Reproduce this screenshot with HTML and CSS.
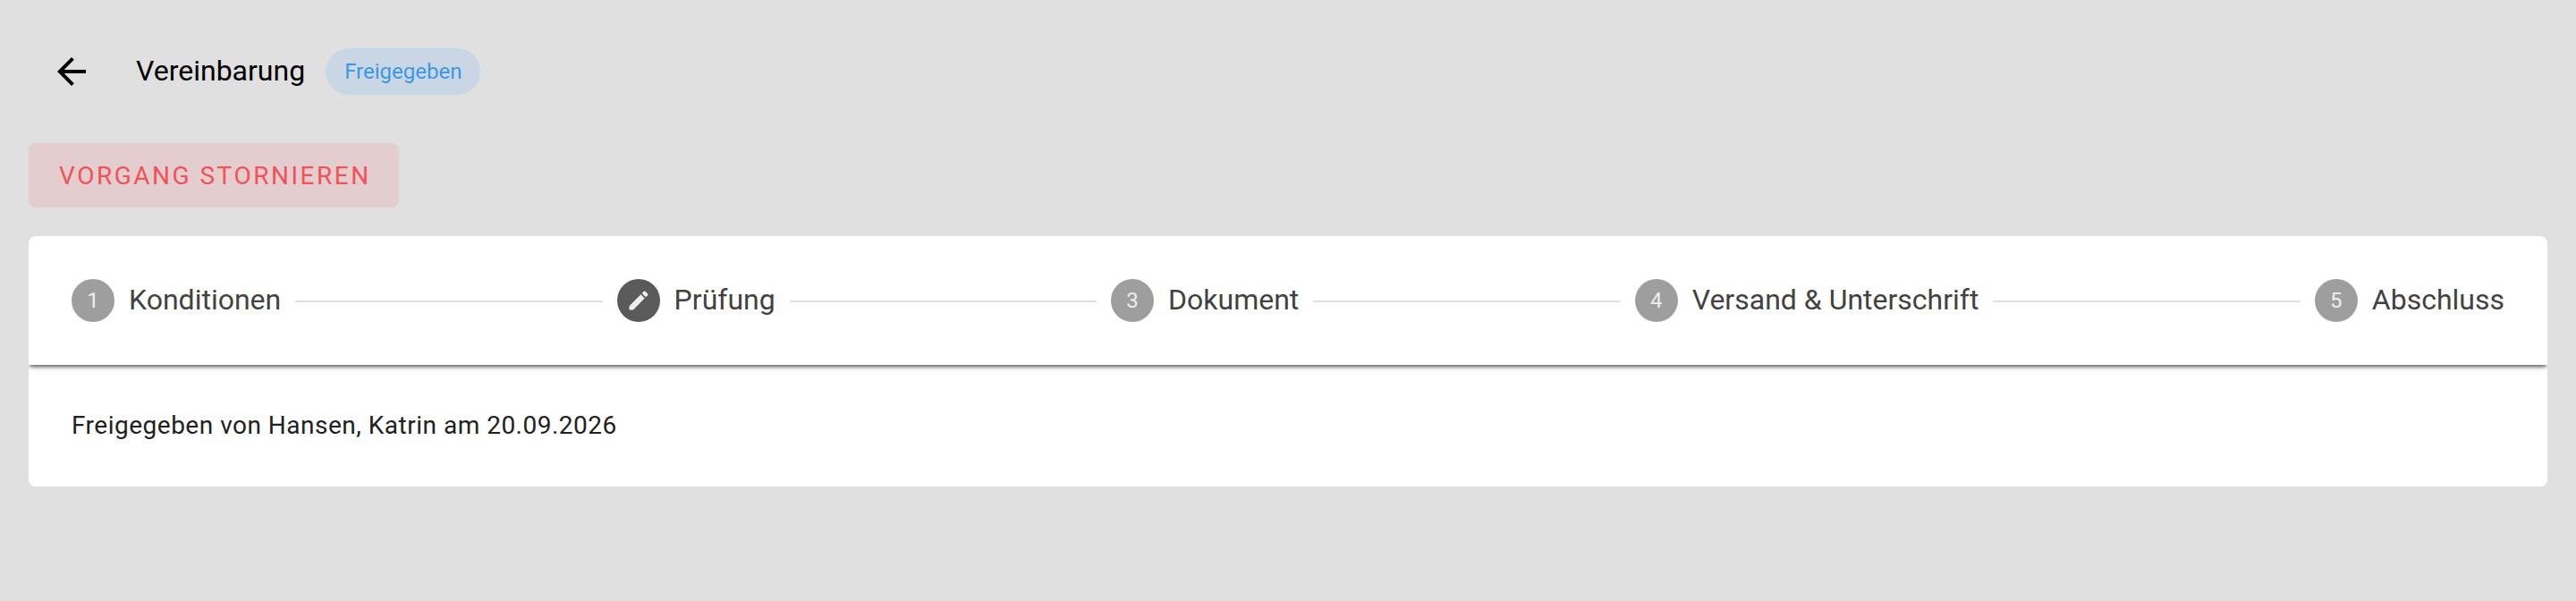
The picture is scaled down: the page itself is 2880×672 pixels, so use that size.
FILE: index.html
```html
<!DOCTYPE html>
<html lang="de">
<head>
<meta charset="utf-8">
<title>Vereinbarung</title>
<link rel="stylesheet" href="styles.css">
</head>
<body>
<header class="topbar">
  <button class="back" aria-label="Zurück">
    <svg viewBox="0 0 24 24" width="48" height="48"><path d="M20 11H7.83l5.59-5.59L12 4l-8 8 8 8 1.41-1.41L7.83 13H20v-2z"/></svg>
  </button>
  <h1 class="title">Vereinbarung</h1>
  <span class="chip">Freigegeben</span>
</header>
<div class="actions"><button class="cancel">VORGANG STORNIEREN</button></div>
<main class="card">
  <nav class="stepper">
    <div class="step"><span class="num">1</span><span class="label">Konditionen</span></div>
    <div class="line"></div>
    <div class="step"><span class="num active"><svg viewBox="0 0 24 24" width="32" height="32"><path d="M3 17.25V21h3.75L17.81 9.94l-3.75-3.75L3 17.25zM20.71 7.04c.39-.39.39-1.02 0-1.41l-2.34-2.34c-.39-.39-1.02-.39-1.41 0l-1.83 1.83 3.75 3.75 1.83-1.83z"/></svg></span><span class="label">Prüfung</span></div>
    <div class="line"></div>
    <div class="step"><span class="num">3</span><span class="label">Dokument</span></div>
    <div class="line"></div>
    <div class="step"><span class="num">4</span><span class="label">Versand &amp; Unterschrift</span></div>
    <div class="line"></div>
    <div class="step"><span class="num">5</span><span class="label">Abschluss</span></div>
  </nav>
  <p class="note">Freigegeben von Hansen, Katrin am 20.09.2026</p>
</main>
</body>
</html>
```
FILE: styles.css
```css
* { box-sizing: border-box; }
html, body { height: 100%; }
body {
  margin: 0;
  padding: 0 32px;
  background: #e0e0e0;
  font-family: Roboto, "Liberation Sans", sans-serif;
  overflow: hidden;
}
.topbar {
  display: flex;
  align-items: center;
  height: 52px;
  margin-top: 54px;
  padding-left: 24px;
}
.back {
  display: flex;
  width: 48px;
  height: 48px;
  margin-right: 48px;
  padding: 0;
  border: 0;
  background: none;
  color: #000;
}
.back svg { fill: currentColor; }
.title {
  margin: 0 23px 0 0;
  padding-bottom: 2px;
  font-size: 32px;
  font-weight: 400;
  line-height: 48px;
  color: #000;
}
.chip {
  display: flex;
  align-items: center;
  height: 52px;
  padding: 0 21px 0 21px;
  border-radius: 26px;
  background: #c9d7e5;
  color: #3b97e8;
  font-size: 24px;
}
.actions { margin-top: 54px; }
.cancel {
  display: block;
  height: 72px;
  padding: 0 31px 0 34px;
  border: 0;
  border-radius: 8px;
  background: #e4cdcf;
  color: #f65154;
  font-family: inherit;
  font-size: 28px;
  letter-spacing: 2.5px;
}
.card {
  margin-top: 32px;
  height: 280px;
  border-radius: 8px;
  background: #fff;
  overflow: hidden;
}
.stepper {
  display: flex;
  align-items: center;
  height: 144px;
  padding: 0 48px;
  box-shadow: 0 4px 4px -2px rgba(0, 0, 0, .5), 0 2px 4px rgba(0, 0, 0, .2), 0 2px 10px rgba(0, 0, 0, .08);
  position: relative;
}
.step { display: flex; align-items: center; gap: 16px; }
.num {
  display: flex;
  align-items: center;
  justify-content: center;
  width: 48px;
  height: 48px;
  border-radius: 50%;
  background: #9e9e9e;
  color: #eee;
  font-size: 24px;
}
.num.active { background: #5a5a5a; }
.num svg { fill: #eee; width: 28px; height: 28px; }
.label { font-size: 32px; line-height: 44px; padding-bottom: 2px; color: #424242; }
.line {
  flex: 1;
  height: 2px;
  margin: 2px 16px 0;
  background: #e0e0e0;
}
.note {
  margin: 48px 48px 0;
  font-size: 28px;
  line-height: 40px;
  letter-spacing: .5px;
  color: #212121;
}
```
